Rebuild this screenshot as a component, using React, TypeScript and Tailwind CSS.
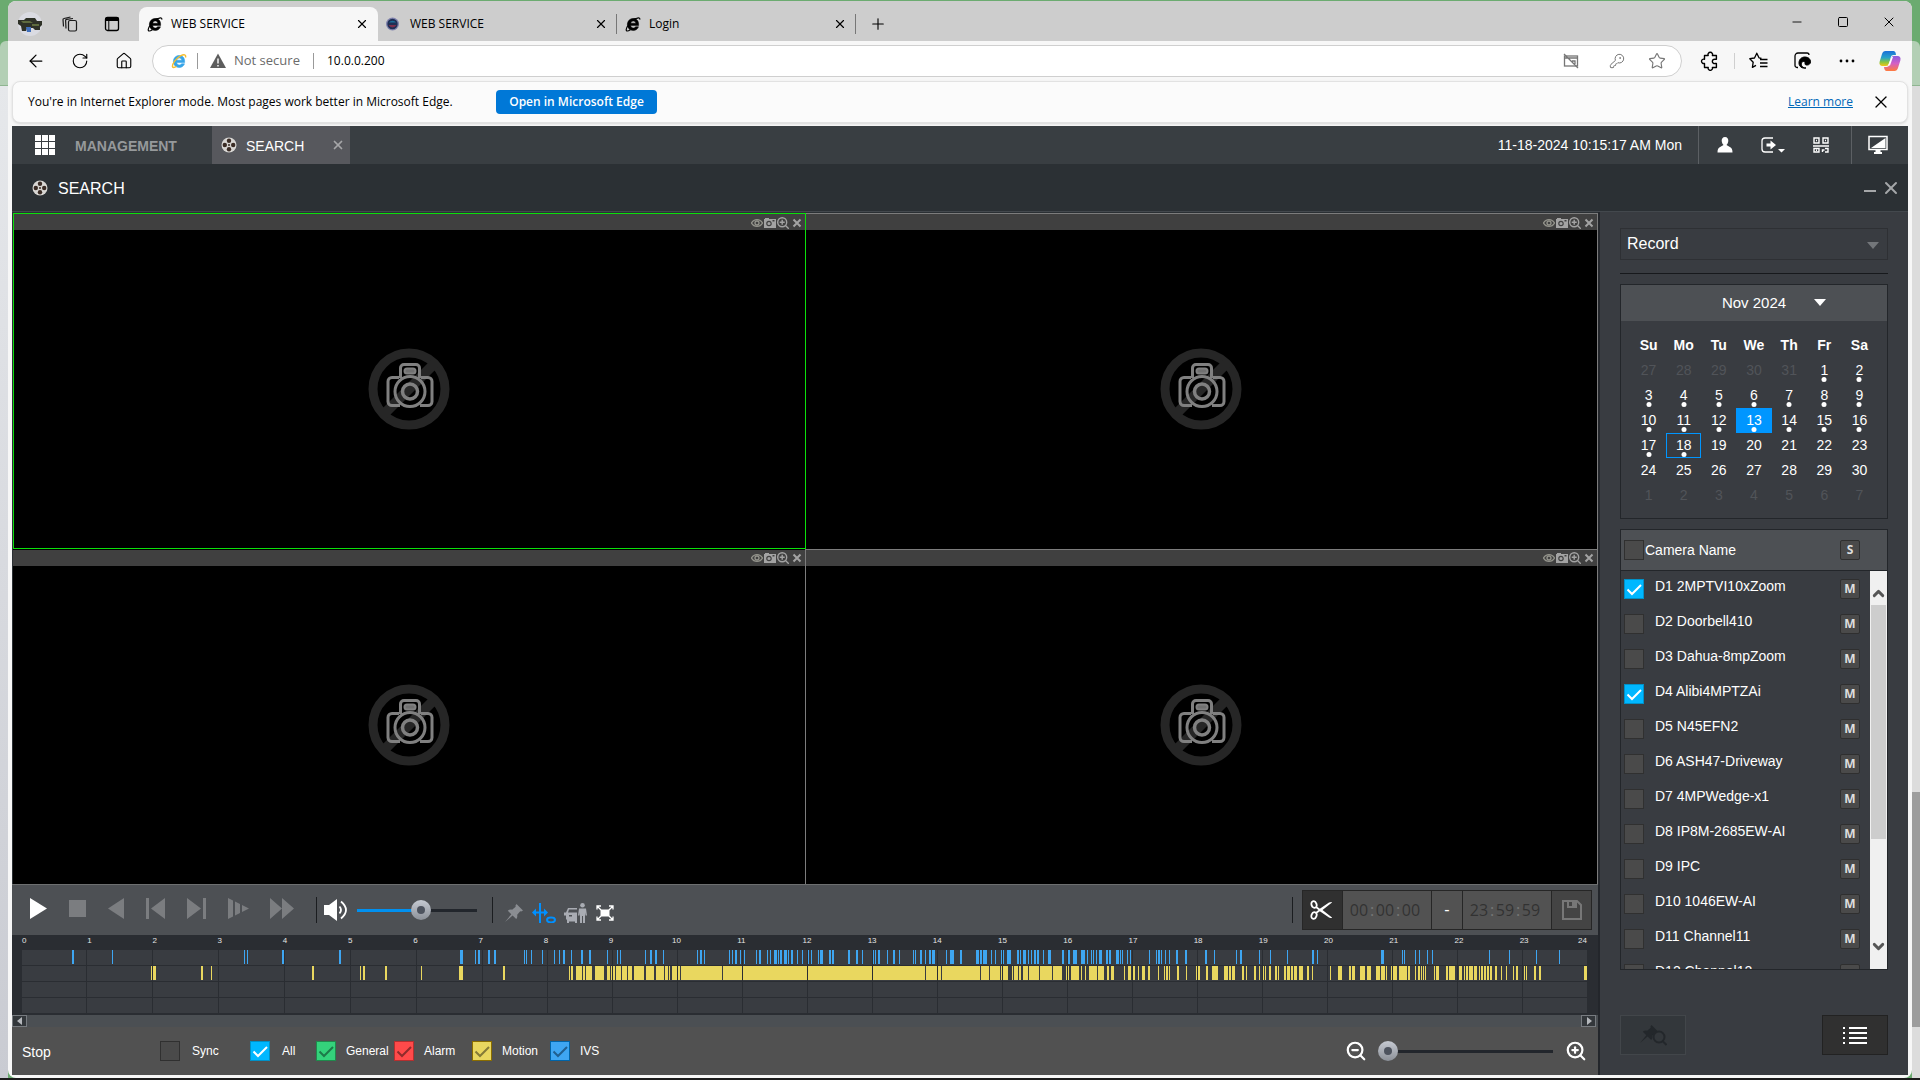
import { useState } from 'react';
import type { ReactNode } from 'react';
import {
  ArrowLeft,
  ChevronDown,
  ChevronUp,
  House,
  KeyRound,
  Minus,
  Plus,
  RotateCw,
  Square,
  Star,
  X,
  ZoomIn,
  ZoomOut,
} from 'lucide-react';

type Segment = [x: number, width: number];

const TRACK_WIDTH = 1565;
const HOUR_LINES = [
  64, 130, 196, 262, 328, 394, 460, 525, 590, 655, 720, 785, 850, 915, 980, 1045, 1110, 1175, 1240, 1305, 1370, 1435,
  1500,
];

const IVS_SEGMENTS: Segment[] = [
  [50, 2], [90, 1], [222, 1], [225, 1], [260, 2], [317, 2], [438, 3], [453, 1], [456, 2], [466, 2], [472, 2],
  [502, 1], [504, 1], [509, 1], [520, 1], [532, 1], [537, 1], [541, 2], [549, 1], [559, 2], [567, 2], [585, 1],
  [595, 1], [598, 1], [623, 1], [628, 2], [633, 2], [641, 1], [675, 1], [678, 2], [682, 1], [707, 1], [710, 1],
  [713, 2], [718, 1], [722, 1], [734, 1], [737, 2], [745, 1], [748, 1], [752, 3], [756, 1], [758, 2], [762, 3],
  [766, 1], [769, 2], [775, 1], [780, 1], [786, 1], [789, 1], [796, 1], [798, 3], [807, 2], [810, 2], [826, 2],
  [834, 2], [840, 1], [851, 1], [853, 1], [856, 2], [865, 1], [871, 2], [877, 1], [891, 1], [893, 1], [898, 2],
  [903, 1], [907, 2], [910, 3], [924, 1], [928, 4], [938, 2], [954, 3], [958, 2], [961, 4], [969, 1], [973, 1],
  [979, 1], [981, 1], [985, 4], [995, 2], [998, 1], [1001, 3], [1006, 1], [1009, 1], [1012, 2], [1015, 2],
  [1021, 1], [1026, 3], [1040, 2], [1046, 2], [1051, 4], [1059, 4], [1065, 1], [1069, 1], [1071, 1], [1074, 1],
  [1077, 3], [1084, 2], [1087, 2], [1094, 3], [1098, 1], [1100, 1], [1105, 1], [1108, 1], [1127, 1], [1134, 1],
  [1136, 2], [1139, 1], [1143, 1], [1147, 1], [1154, 2], [1163, 2], [1183, 2], [1192, 1], [1214, 1], [1218, 2],
  [1237, 1], [1248, 1], [1265, 1], [1290, 2], [1295, 1], [1359, 3], [1380, 1], [1382, 1], [1393, 1], [1397, 1],
  [1405, 1], [1410, 1], [1467, 1], [1487, 1], [1514, 1], [1537, 1],
];

const MOTION_SEGMENTS: Segment[] = [
  [129, 1], [131, 3], [179, 2], [189, 1], [290, 2], [338, 1], [341, 2], [363, 2], [399, 1], [437, 4], [481, 2],
  [547, 1], [549, 2], [554, 6], [561, 2], [564, 6], [573, 9], [585, 3], [589, 1], [591, 2], [594, 5], [600, 5],
  [606, 4], [612, 10], [624, 8], [634, 8], [643, 3], [647, 1], [650, 8], [659, 41], [701, 202], [904, 15],
  [920, 38], [959, 8], [968, 10], [979, 1], [980, 6], [990, 1], [992, 4], [997, 2], [1001, 5], [1007, 10],
  [1018, 12], [1031, 9], [1044, 1], [1046, 1], [1049, 8], [1059, 1], [1063, 1], [1067, 8], [1076, 6], [1085, 2],
  [1089, 3], [1102, 1], [1106, 3], [1111, 2], [1116, 1], [1120, 3], [1126, 2], [1136, 1], [1142, 1], [1144, 2],
  [1147, 1], [1155, 2], [1164, 1], [1174, 1], [1176, 2], [1184, 2], [1190, 6], [1202, 4], [1207, 2], [1210, 3],
  [1220, 2], [1224, 1], [1232, 2], [1237, 1], [1241, 1], [1243, 1], [1247, 2], [1253, 2], [1256, 1], [1262, 2],
  [1265, 3], [1269, 2], [1272, 3], [1277, 4], [1285, 2], [1290, 1], [1308, 1], [1316, 4], [1327, 2], [1330, 3],
  [1338, 5], [1345, 4], [1354, 4], [1359, 4], [1364, 1], [1369, 1], [1371, 4], [1377, 8], [1386, 2], [1393, 1],
  [1396, 2], [1399, 1], [1401, 1], [1403, 1], [1412, 1], [1414, 3], [1424, 2], [1427, 6], [1437, 3], [1442, 1],
  [1444, 2], [1447, 4], [1452, 3], [1457, 1], [1459, 2], [1462, 2], [1465, 2], [1468, 2], [1473, 2], [1479, 1],
  [1484, 1], [1491, 1], [1494, 2], [1502, 1], [1504, 1], [1512, 2], [1517, 2], [1562, 3],
];

const CAMERAS = [
  'D1 2MPTVI10xZoom',
  'D2 Doorbell410',
  'D3 Dahua-8mpZoom',
  'D4 Alibi4MPTZAi',
  'D5 N45EFN2',
  'D6 ASH47-Driveway',
  'D7 4MPWedge-x1',
  'D8 IP8M-2685EW-AI',
  'D9 IPC',
  'D10 1046EW-AI',
  'D11 Channel11',
  'D12 Channel12',
];

const WEEKDAYS = ['Su', 'Mo', 'Tu', 'We', 'Th', 'Fr', 'Sa'];

const WEEKS = [
  [27, 28, 29, 30, 31, 1, 2],
  [3, 4, 5, 6, 7, 8, 9],
  [10, 11, 12, 13, 14, 15, 16],
  [17, 18, 19, 20, 21, 22, 23],
  [24, 25, 26, 27, 28, 29, 30],
  [1, 2, 3, 4, 5, 6, 7],
];

/* ---------- icons ---------- */

const ExplorerIcon = ({ className }: { className: string }) => (
  <svg viewBox="0 0 16 16" className={className} aria-hidden="true">
    <path
      d="M13.600 9.600H5.700c.1 1.500 1.200 2.400 2.600 2.400 1 0 1.800-.4 2.200-1.200h3c-.8 2.300-2.700 3.700-5.300 3.700-3.400 0-5.800-2.400-5.800-5.900 0-3.600 2.500-6.100 5.900-6.100 3.500 0 5.700 2.600 5.300 7.100zM5.800 7.200h4.900C10.600 5.800 9.600 5 8.300 5 7 5 6 5.800 5.800 7.200z"
      fill="currentColor"
      stroke="currentColor"
      strokeWidth="0.500"
    />
    <path
      d="M14.800 3.600c.3-1.600-.9-2.200-3.200-1.200M2.900 9.500C.9 12.500.7 15 2.300 15c.8 0 1.900-.5 3-1.300M11.600 2.400C8 2.800 4.600 5.600 2.900 8.600"
      fill="none"
      stroke="currentColor"
      strokeWidth="1.200"
    />
  </svg>
);

const ExplorerColorIcon = () => (
  <svg viewBox="0 0 16 16" className="size-4" aria-hidden="true">
    <path
      d="M13.600 9.600H5.700c.1 1.500 1.200 2.400 2.600 2.400 1 0 1.800-.4 2.200-1.200h3c-.8 2.300-2.700 3.700-5.300 3.700-3.400 0-5.800-2.400-5.800-5.900 0-3.600 2.500-6.100 5.900-6.100 3.500 0 5.700 2.600 5.300 7.100zM5.800 7.200h4.900C10.600 5.800 9.600 5 8.300 5 7 5 6 5.800 5.800 7.200z"
      fill="#35a4e8"
      stroke="#35a4e8"
      strokeWidth="0.600"
    />
    <path
      d="M14.500 4.500c.8-3-1.500-3.400-5-1.600C5.500 5 1.200 10.500 1.400 13.400c.1 1.500 2 1.300 4 0"
      fill="none"
      stroke="#f5bd2f"
      strokeWidth="1.400"
    />
  </svg>
);

const ReelIcon = () => (
  <svg viewBox="0 0 16 16" className="size-4" aria-hidden="true">
    <circle cx="8" cy="8" r="7.500" fill="#d8d6d3" />
    <circle cx="8" cy="3.800" r="2.200" fill="#3a2b24" />
    <circle cx="8" cy="12.200" r="2.200" fill="#3a2b24" />
    <circle cx="3.800" cy="8" r="2.200" fill="#3a2b24" />
    <circle cx="12.200" cy="8" r="2.200" fill="#3a2b24" />
    <circle cx="8" cy="8" r="1" fill="#3a2b24" />
  </svg>
);

const NoCameraIcon = () => (
  <svg viewBox="0 0 82 82" className="size-[82px]" aria-hidden="true">
    <circle cx="41" cy="41" r="36" fill="none" stroke="#262626" strokeWidth="9" />
    <path d="M66 16 16 66" stroke="#262626" strokeWidth="10" />
    <g fill="none" stroke="#808080" strokeWidth="3">
      <path d="M31 29.500h-7a4 4 0 0 0-4 4v20a4 4 0 0 0 4 4h8M52 57.500h8a4 4 0 0 0 4-4v-20a4 4 0 0 0-4-4h-7" />
      <path d="M32.500 30V20a3.500 3.500 0 0 1 3.500-3.500h12a3.500 3.500 0 0 1 3.500 3.500v10" />
      <rect x="36.500" y="20.500" width="11" height="5" rx="2.500" fill="#707070" strokeWidth="2" />
      <circle cx="42" cy="43.500" r="15" />
      <circle cx="42" cy="43.500" r="7.500" strokeWidth="3.500" />
    </g>
  </svg>
);

const CopilotIcon = () => (
  <svg viewBox="0 0 22 22" className="size-[22px]" aria-hidden="true">
    <defs>
      <linearGradient id="copilotLeft" x1="0" y1="0" x2="0" y2="1">
        <stop offset="0" stopColor="#1b6fd8" />
        <stop offset="0.450" stopColor="#27a3c9" />
        <stop offset="0.750" stopColor="#8cc63f" />
        <stop offset="1" stopColor="#f5c518" />
      </linearGradient>
      <linearGradient id="copilotRight" x1="0" y1="0" x2="0" y2="1">
        <stop offset="0" stopColor="#8a5be0" />
        <stop offset="0.500" stopColor="#d45fc4" />
        <stop offset="1" stopColor="#ff7a3d" />
      </linearGradient>
    </defs>
    <path d="M6.500 1h8c1.300 0 1.800 1 2.200 2.200L17 5h-2.500c-1.500 0-2.300.8-2.700 2.200L10 13.500C9.500 15.200 8.700 16 7 16H3.500C1 16 0 14.200.6 11.800L3 4C3.700 2 4.700 1 6.500 1z" fill="url(#copilotLeft)" />
    <path d="M15.500 21h-8c-1.300 0-1.800-1-2.200-2.200L5 17h2.500c1.500 0 2.300-.8 2.700-2.200L12 8.500C12.500 6.800 13.300 6 15 6h3.500C21 6 22 7.800 21.400 10.200L19 18c-.7 2-1.700 3-3.500 3z" fill="url(#copilotRight)" />
    <path d="M12.500 7h1.500l-3 8.500H9z" fill="#fff" />
  </svg>
);

const PinShape = () => (
  <path d="M12.500 1 19 7.500l-1.800 1-1-.3-3 3.600c.3 2-.1 3.300-1 4.300L8.600 12.500 1 19l6.300-7.700L3.800 7.700c1-1 2.500-1.300 4.300-1l3.600-3-.3-1z" />
);

/* ---------- browser chrome ---------- */

const IconButton = ({ label, className, children }: { label: string; className: string; children: ReactNode }) => (
  <button type="button" aria-label={label} className={`flex items-center justify-center ${className}`}>
    {children}
  </button>
);

interface BrowserTabProps {
  title: string;
  icon: ReactNode;
  active?: boolean;
  divider?: boolean;
}

const BrowserTab = ({ title, icon, active, divider }: BrowserTabProps) => (
  <div
    className={`flex h-[34px] w-[239px] items-center pb-px pl-2 pr-[10px] ${active ? 'rounded-t-lg bg-[#f7f7f7]' : ''}`}
  >
    <button type="button" className="flex flex-1 items-center gap-2 text-left text-[12px] leading-4">
      {icon}
      <span>{title}</span>
    </button>
    <IconButton label={`Close ${title}`} className="size-3">
      <X className="size-[14px] shrink-0" strokeWidth={2} />
    </IconButton>
    {divider && <span className="-mr-[10px] ml-[9px] h-5 w-px bg-[#777]" />}
  </div>
);

const TitleBar = () => (
  <div className="flex h-10 items-end rounded-t-lg bg-[#cdcdcd]">
    <div className="flex h-[34px] w-[131px] items-center pl-[10px]">
      <svg viewBox="0 0 24 24" className="size-6" role="img" aria-label="Profile">
        <circle cx="12" cy="12" r="12" fill="#dadbe2" />
        <path d="M0 8h6l2-2h9l2 3h5v4l-2 2v3h-5l-2-2H9l-1 3H4l-1-5-3-2z" fill="#2e3127" />
        <path d="M3 9h9l3 2H5zM14 12h7v2h-7z" fill="#5f6b3f" />
        <path d="M8 15h5v5H9z" fill="#3f6fbc" />
      </svg>
      <IconButton label="Workspaces" className="ml-5 size-4">
        <svg viewBox="0 0 16 16" className="size-4" fill="none" stroke="#1a1a1a" strokeWidth="1.200">
          <rect x="6.500" y="4.500" width="8" height="10.500" rx="1.500" />
          <path d="M4 12.500 3.600 4.500q0-1 1-1.200L11 2.500M1.500 10.500 1 3.700q0-1 1-1.200L8.500 1" />
        </svg>
      </IconButton>
      <IconButton label="Tab actions menu" className="ml-[26px] size-4">
        <svg viewBox="0 0 16 16" className="size-4">
          <rect x="1.500" y="1.500" width="13" height="13" rx="2" fill="none" stroke="#000" strokeWidth="1.300" />
          <path d="M1 5V3a2 2 0 0 1 2-2h10a2 2 0 0 1 2 2v2z" />
          <path d="M4.800 5v9.500" stroke="#000" />
        </svg>
      </IconButton>
    </div>
    <BrowserTab title="WEB SERVICE" active icon={<ExplorerIcon className="size-4" />} />
    <BrowserTab
      title="WEB SERVICE"
      divider
      icon={
        <svg viewBox="0 0 16 16" className="size-4" aria-hidden="true">
          <circle cx="6.500" cy="8" r="6.500" fill="#8083ad" />
          <circle cx="6.500" cy="8" r="5.200" fill="#1f2f55" />
          <path d="M3 6.500a4 3.500 0 0 1 7 0z" fill="#1f6f9c" />
          <path d="M2.500 9h8a4.500 4.500 0 0 1-8 0z" fill="#7b2f4d" />
        </svg>
      }
    />
    <BrowserTab title="Login" divider icon={<ExplorerIcon className="size-4" />} />
    <IconButton label="New tab" className="ml-[14px] mb-[9px] size-4">
      <Plus className="size-[18px] shrink-0" strokeWidth={1.5} />
    </IconButton>
    <div className="ml-auto flex items-center gap-8 pb-3 pr-4">
      <IconButton label="Minimize" className="size-[14px]">
        <Minus className="size-[14px]" strokeWidth={1.5} />
      </IconButton>
      <IconButton label="Maximize" className="size-[14px]">
        <Square className="size-3" strokeWidth={2} />
      </IconButton>
      <IconButton label="Close" className="size-[14px]">
        <X className="size-[16px] shrink-0" strokeWidth={1.5} />
      </IconButton>
    </div>
  </div>
);

const AddressBar = () => (
  <div className="flex items-center pb-1 pl-[18px] pr-[11px] pt-1">
    <div className="flex w-[126px] gap-6">
      <IconButton label="Back" className="size-5">
        <ArrowLeft className="size-5" strokeWidth={1.5} />
      </IconButton>
      <IconButton label="Refresh" className="size-5">
        <RotateCw className="size-[18px]" strokeWidth={1.5} />
      </IconButton>
      <IconButton label="Home" className="size-5">
        <House className="size-[18px]" strokeWidth={1.5} />
      </IconButton>
    </div>
    <div className="flex h-8 flex-1 items-center rounded-full border border-[#cfcfcf] bg-white pl-[18px] pr-4">
      <ExplorerColorIcon />
      <span className="ml-[10px] h-4 w-px bg-[#9a9a9a]" />
      <svg viewBox="0 0 16 16" className="ml-3 size-4" aria-hidden="true">
        <path d="M8 .5 16 15H0z" fill="#5d5d5d" />
        <path d="M8 5.500v5M8 12v1.500" stroke="#fff" strokeWidth="1.400" />
      </svg>
      <span className="ml-2 w-[79px] text-[13px] text-[#6b6b6b]">Not secure</span>
      <span className="h-4 w-px bg-[#9a9a9a]" />
      <input
        type="text"
        aria-label="Address"
        defaultValue="10.0.0.200"
        className="ml-[13px] flex-1 text-[12px] text-black outline-none"
      />
      <div className="flex items-center gap-7 text-[#767676]">
        <IconButton label="Pop-up blocked" className="size-4">
          <svg viewBox="0 0 16 16" className="size-4" fill="none" stroke="currentColor" strokeWidth="1.300">
            <rect x="1.500" y="3" width="13" height="10" />
            <path d="M1.500 5h13M1 1l14 14M9 8h3v3" />
          </svg>
        </IconButton>
        <div className="ml-[2px] flex items-center gap-6">
          <IconButton label="Passwords" className="size-4">
            <KeyRound className="size-4" strokeWidth={1.5} />
          </IconButton>
          <IconButton label="Add to favorites" className="size-4">
            <Star className="size-[18px] shrink-0" strokeWidth={1.5} />
          </IconButton>
        </div>
      </div>
    </div>
    <div className="ml-[18px] flex items-center">
      <IconButton label="Extensions" className="size-5">
        <svg viewBox="0 0 20 20" className="size-5" fill="none" stroke="#000" strokeWidth="1.400" strokeLinejoin="round">
          <path d="M4.500 4.500h3.700a2.300 2.300 0 1 1 4.200 0h4v3.800h-1.200a2.200 2.200 0 1 0 0 4.200h1.200v4h-4a2.200 2.200 0 1 1-4.200 0H4.500v-4.100a2.200 2.200 0 1 1 0-4.100z" />
        </svg>
      </IconButton>
      <span className="ml-[14px] h-4 w-px bg-[#cfcfcf]" />
      <IconButton label="Favorites" className="ml-[14px] size-5">
        <svg viewBox="0 0 20 20" className="size-5" fill="none" stroke="#000" strokeWidth="1.300" strokeLinejoin="round">
          <path d="M12.500 7.300 10 6.800 7.800 2.200 5.500 7l-4.700.7 3.400 3.500-.8 5.200L7 14.400M11 8.500h7.500M11 12h7.500M11 15.500h7.500" />
        </svg>
      </IconButton>
      <IconButton label="Internet Explorer mode" className="ml-6 size-5">
        <svg viewBox="0 0 20 20" className="size-5" fill="none" stroke="#000">
          <path d="M5 16.500H4a2 2 0 0 1-2-2V5a3 3 0 0 1 3-3h9a2 2 0 0 1 2 2" strokeWidth="1.300" />
          <path d="M6 12c0-3.500 2.300-6 6-6 3.500 0 5.500 2.200 5.500 4.800 0 2-1.500 3.200-3.500 3.200-1.500 0-2.200-.6-2-1.500.3-1 0-2-1.500-2-3 0-3.500 6.500 2.500 6.500-4 .8-7-1.500-7-5z" fill="#000" strokeWidth="1" />
        </svg>
      </IconButton>
      <IconButton label="Settings and more" className="ml-6 size-5">
        <svg viewBox="0 0 20 20" className="size-5">
          <circle cx="4" cy="10" r="1.400" />
          <circle cx="10" cy="10" r="1.400" />
          <circle cx="16" cy="10" r="1.400" />
        </svg>
      </IconButton>
      <IconButton label="Copilot" className="ml-[22px] size-[22px]">
        <CopilotIcon />
      </IconButton>
    </div>
  </div>
);

const ModeBanner = () => (
  <div className="mx-1 flex h-[42px] items-center rounded-lg border border-[#e2e2e2] bg-[#fbfbfb] pl-[15px] pr-[18px] text-[12px] shadow-sm">
    <p className="w-[468px] whitespace-nowrap text-black">
      You&apos;re in Internet Explorer mode. Most pages work better in Microsoft Edge.
    </p>
    <button type="button" className="h-6 w-[161px] rounded-sm bg-[#0078d7] text-[12px] font-semibold text-white">
      Open in Microsoft Edge
    </button>
    <a href="#learn-more" className="ml-auto text-[#0067b8] underline">
      Learn more
    </a>
    <IconButton label="Dismiss" className="ml-5 size-[16px]">
      <X className="size-[20px] shrink-0" strokeWidth={1.5} />
    </IconButton>
  </div>
);

/* ---------- recorder page ---------- */

const NavBar = () => (
  <nav className="flex h-[38px] items-center bg-[#393e42]">
    <div className="flex w-[200px] items-center pl-[22px]">
      <IconButton label="Menu" className="size-[22px]">
        <svg viewBox="0 0 22 22" className="size-[22px]" fill="#fff">
          <path d="M1 1h6v6H1zM8 1h6v6H8zM15 1h6v6h-6zM1 8h6v6H1zM8 8h6v6H8zM15 8h6v6h-6zM1 15h6v6H1zM8 15h6v6H8zM15 15h6v6h-6z" />
        </svg>
      </IconButton>
      <button type="button" className="ml-[19px] pt-[2px] text-[14px] font-bold text-[#96999b]">
        MANAGEMENT
      </button>
    </div>
    <div className="flex h-full w-[138px] items-center bg-[#57585d] pl-[9px] pr-[7px]">
      <button type="button" className="flex flex-1 items-center gap-[9px] text-[14px] text-white">
        <ReelIcon />
        <span className="pt-[2px]">SEARCH</span>
      </button>
      <IconButton label="Close SEARCH" className="size-[10px]">
        <X className="size-[14px] shrink-0 text-[#a6a7a9]" strokeWidth={3} />
      </IconButton>
    </div>
    <time className="ml-auto pr-4 text-[14px] text-white">11-18-2024 10:15:17 AM Mon</time>
    <div className="flex h-full items-center border-l border-[#5c6064] pl-[18px] text-white">
      <IconButton label="User" className="size-4">
        <svg viewBox="0 0 16 16" className="size-4" fill="currentColor">
          <path d="M8 0c2.300 0 3.500 1.700 3.300 4-.2 2-1 3.300-1.800 4l3.800 2.200c1.400.8 2.200 2 2.200 5.300H.5c0-3.300.8-4.500 2.200-5.300L6.500 8C5.700 7.300 4.900 6 4.700 4 4.500 1.700 5.700 0 8 0z" />
        </svg>
      </IconButton>
      <IconButton label="Log out" className="ml-[28px] h-4 w-6">
        <svg viewBox="0 0 24 16" className="h-4 w-6" fill="none" stroke="currentColor" strokeWidth="1.300">
          <path d="M12 1H4a3 3 0 0 0-3 3v8a3 3 0 0 0 3 3h8" />
          <path d="M5.500 6.500h4V3.500L15 8l-5.500 4.500v-3h-4zM17 12h7l-3.500 3.500z" fill="currentColor" stroke="none" />
        </svg>
      </IconButton>
      <IconButton label="QR code" className="ml-7 size-4">
        <svg viewBox="0 0 16 16" className="size-4" fill="none" stroke="currentColor" strokeWidth="1.400">
          <path d="M1 1h5v5H1zM10 1h5v5h-5zM1 11.500h5V15H1zM0 9h16M9.500 15v-2h2M12 11.500h3V15h-3M3 3.500h1M12 3.500h1M3 13.200h1" />
        </svg>
      </IconButton>
    </div>
    <div className="ml-[22px] flex h-full w-[57px] items-center border-l border-[#5c6064] pl-4 text-white">
      <IconButton label="Display" className="size-5">
        <svg viewBox="0 0 20 20" className="size-5" fill="currentColor">
          <path d="M1 1.500h18v13H1z" fill="none" stroke="currentColor" strokeWidth="1.500" />
          <path d="M17.500 3v10H3zM7.500 15h5v2H14v2H6v-2h1.500z" />
        </svg>
      </IconButton>
    </div>
  </nav>
);

const PageHeading = () => (
  <header className="flex h-12 items-center border-b border-[#43484d] bg-[#2b3034] pl-5 pr-[9px] text-white">
    <ReelIcon />
    <h1 className="ml-[10px] pt-[2px] text-[16px]">SEARCH</h1>
    <IconButton label="Minimize page" className="ml-auto size-4 text-[#a5a7a9]">
      <svg viewBox="0 0 16 16" className="size-4">
        <path d="M2 11h12" stroke="currentColor" strokeWidth="2" />
      </svg>
    </IconButton>
    <IconButton label="Close page" className="ml-[5px] size-4 text-[#a5a7a9]">
      <X className="size-5 shrink-0" strokeWidth={2.4} />
    </IconButton>
  </header>
);

const VideoCell = ({ selected, className }: { selected?: boolean; className: string }) => (
  <section className={`flex flex-col bg-black ${className} ${selected ? 'border border-[#0be00b]' : ''}`}>
    <div className="flex h-4 items-center justify-end gap-px bg-[#404040] pr-[3px] pt-px text-[#a3a3a3]">
      <IconButton label="Fisheye" className="size-3">
        <svg viewBox="0 0 12 12" className="size-3" fill="none" stroke="#94948c" strokeWidth="1.300">
          <path d="M.5 6C3 1.500 9 1.500 11.500 6 9 10.500 3 10.500.5 6z" />
          <circle cx="6" cy="6" r="2" />
        </svg>
      </IconButton>
      <IconButton label="Snapshot" className="size-3">
        <svg viewBox="0 0 12 12" className="size-3" fill="currentColor">
          <path d="M0 2h1V1h4v1h7v9H0z" />
          <circle cx="5" cy="6.500" r="2.200" fill="none" stroke="#404040" strokeWidth="1.200" />
          <path d="M8.500 3h2v1.500h-2z" fill="#404040" />
        </svg>
      </IconButton>
      <IconButton label="Digital zoom" className="size-3">
        <svg viewBox="0 0 12 12" className="size-3" fill="none" stroke="currentColor" strokeWidth="1.400">
          <circle cx="5.200" cy="5.200" r="4.500" />
          <path d="M2.700 5.200h5M5.200 2.700v5M8.500 8.500l3.300 3.300" />
        </svg>
      </IconButton>
      <IconButton label="Close window" className="ml-[2px] size-[10px]">
        <svg viewBox="0 0 10 10" className="size-[10px]" stroke="currentColor" strokeWidth="2">
          <path d="M1.500 1.500l7 7M8.500 1.500l-7 7" />
        </svg>
      </IconButton>
    </div>
    <div className="flex flex-1 items-center justify-center">
      <NoCameraIcon />
    </div>
  </section>
);

const KNOB = (
  <svg viewBox="0 0 20 20" className="size-5" aria-hidden="true">
    <defs>
      <linearGradient id="knobFill" x1="0" y1="0" x2="0" y2="1">
        <stop offset="0" stopColor="#c6cad2" />
        <stop offset="1" stopColor="#8b9098" />
      </linearGradient>
    </defs>
    <circle cx="10" cy="10" r="10" fill="url(#knobFill)" />
    <circle cx="10" cy="10" r="4" fill="#4d535e" />
  </svg>
);

interface SliderProps {
  label: string;
  initial: number;
  className: string;
}

// The native range input sits invisibly above the drawn track so it still takes input.
const Slider = ({ label, initial, className }: SliderProps) => {
  const [value, setValue] = useState(initial);

  return (
    <div className={`relative flex h-5 items-center ${className}`}>
      <span className="h-[3px] bg-[#0090f0]" style={{ width: `${value}%` }} />
      <span className="h-[3px] flex-1 bg-[#22262c]" />
      <span className="absolute -translate-x-1/2" style={{ left: `${value}%` }}>
        {KNOB}
      </span>
      <input
        type="range"
        aria-label={label}
        value={value}
        onChange={(e) => setValue(Number(e.target.value))}
        className="absolute inset-0 w-full opacity-0"
      />
    </div>
  );
};

const TRANSPORT = [
  { label: 'Play', width: 17, d: 'M0 0v21l17-10.500z' },
  { label: 'Stop', width: 17, d: 'M0 2h17v17H0z' },
  { label: 'Reverse play', width: 16, d: 'M16 0v21L0 10.500z' },
  { label: 'Previous frame', width: 19, d: 'M0 0h3v21H0zM19 0v21L5 10.500z' },
  { label: 'Next frame', width: 19, d: 'M0 0v21l14-10.500zM16 0h3v21h-3z' },
  { label: 'Slow', width: 20, d: 'M0 0l5 2.500v16L0 21zM7 3.500l5 2.500v9l-5 2.500zM14 7l7 3.500-7 3.500z' },
  { label: 'Fast forward', width: 24, d: 'M0 0l12 10.500L0 21zM12 0l12 10.500L12 21z' },
];

const TimeField = ({ label, parts }: { label: string; parts: string[] }) => (
  <fieldset
    aria-label={label}
    className="flex h-full w-[89px] items-center border-r border-[#262626] bg-[#525252] pl-[6px] font-['Open_Sans',sans-serif] text-[16px] text-[#323232]"
  >
    {parts.map((part, i) => (
      <span key={i} className="flex items-center">
        {i > 0 && <span className="w-[6px] text-center text-[#777]">:</span>}
        <input
          type="text"
          aria-label={`${label} part ${i + 1}`}
          defaultValue={part}
          className="w-5 text-center outline-none"
        />
      </span>
    ))}
  </fieldset>
);

const PlaybackControls = () => (
  <div className="flex h-[51px] items-center border-t border-[#6d6f70] bg-[#4d5054] pl-[18px] pr-[6px]">
    <div className="flex items-center gap-[22px] pb-[3px]">
      {TRANSPORT.map(({ label, width, d }) => (
        <IconButton key={label} label={label} className={label === 'Play' ? 'text-white' : 'text-[#7b7d80]'}>
          <svg width={width} height="21" viewBox={`0 0 ${width} 21`} className="overflow-visible" fill="currentColor">
            <path d={d} />
          </svg>
        </IconButton>
      ))}
    </div>
    <span className="ml-[22px] h-[26px] w-px bg-[#1b1d20]" />
    <IconButton label="Mute" className="ml-[7px] h-[22px] w-6 text-white">
      <svg viewBox="0 0 24 22" className="h-[22px] w-6" fill="none" stroke="currentColor" strokeWidth="1.800">
        <path d="M0 6h5l8-6v22l-8-6H0z" fill="currentColor" stroke="none" />
        <path d="M15.500 7.500q3 3.500 0 7M17 2.500q10 8.500 0 17" />
      </svg>
    </IconButton>
    <Slider label="Volume" initial={53} className="ml-[9px] w-[120px]" />
    <span className="ml-[15px] h-[26px] w-px bg-[#1b1d20]" />
    <div className="ml-[11px] flex items-center gap-2 pt-[6px]">
      <IconButton label="Mark" className="size-5">
        <svg viewBox="0 0 20 20" className="size-5" fill="#8a8d92">
          <PinShape />
        </svg>
      </IconButton>
      <IconButton label="Sync view" className="h-5 w-6">
        <svg viewBox="0 0 24 20" className="h-5 w-6" fill="none" stroke="#0090ff" strokeWidth="2">
          <path d="M8 0v20" />
          <path d="M0 9.500l4-4v3h8v-3l4 4-4 4v-3H4v3z" fill="#0090ff" stroke="none" />
          <ellipse cx="19" cy="17" rx="4" ry="2.400" />
        </svg>
      </IconButton>
      <IconButton label="Smart search" className="h-5 w-6">
        <svg viewBox="0 0 24 20" className="h-5 w-6" fill="#a9acb3">
          <circle cx="18.500" cy="2.300" r="2.300" />
          <path d="M15 5.500h7l1 7h-1.500l-.5-3V20h-2v-7h-1v7h-2V9.500l-.5 3H14z" />
          <path d="M4 5h9v1.500H5L4 9.500h9V20h-2v-1.500H5V20H3v-3.500H2v-4H0V9.500h2z" />
          <path d="M5 12h3v1.500H5z" fill="#4d5054" />
        </svg>
      </IconButton>
      <IconButton label="Full screen" className="size-[18px] text-white">
        <svg viewBox="0 0 18 18" className="size-[18px]" fill="none" stroke="currentColor" strokeWidth="1.300">
          <path d="M1 5.500V2h4M13 2h4v3.500M17 12.500V16h-4M5 16H1v-3.500M1 2l4 4M17 2l-4 4M1 16l4-4M17 16l-4-4" />
          <path d="M4.500 5.500h9v7h-9z" fill="currentColor" stroke="none" />
        </svg>
      </IconButton>
    </div>
    <span className="ml-auto h-[26px] w-px bg-[#1b1d20]" />
    <div className="ml-[9px] flex h-10 border border-[#262626]">
      <IconButton label="Clip" className="w-10 border-r border-[#262626] bg-[#303030] pr-[3px] text-white">
        <svg viewBox="0 0 22 20" className="h-5 w-[22px]" fill="none" stroke="currentColor" strokeWidth="1.800">
          <ellipse cx="4" cy="4.500" rx="2.500" ry="3.400" transform="rotate(-20 4 4.500)" />
          <ellipse cx="4" cy="15.500" rx="2.500" ry="3.400" transform="rotate(20 4 15.500)" />
          <path d="M6 7l4 3-4 3" />
          <path d="M8 10 19 2.500q3-1 3 0L12.500 10 22 17.500q0 1-3 0z" fill="currentColor" stroke="none" />
        </svg>
      </IconButton>
      <TimeField label="Start time" parts={['00', '00', '00']} />
      <span className="flex w-[31px] items-center justify-center border-r border-[#262626] bg-[#525252] text-[16px] text-white">
        -
      </span>
      <TimeField label="End time" parts={['23', '59', '59']} />
      <IconButton label="Save clip" className="w-[39px] bg-[#444] text-[#777]">
        <svg viewBox="0 0 20 20" className="size-5" fill="none" stroke="currentColor" strokeWidth="2">
          <path d="M1 1h14l4 4v14H1z" />
          <path d="M6 1v6h8V1" />
          <path d="M10 2h3v4h-3z" fill="currentColor" stroke="none" />
        </svg>
      </IconButton>
    </div>
  </div>
);

const Timeline = () => (
  <div className="bg-[#2a2d32] pb-px pl-[10px] pr-[11px]">
    <div className="flex h-[15px] pt-px text-[8px] leading-[9px] text-[#e4e4e4]">
      {Array.from({ length: 24 }, (_, hour) => (
        <div key={hour} className="flex flex-1 justify-between">
          <span className={hour >= 10 ? '-ml-[2px]' : ''}>{hour}</span>
          {hour === 23 && <span>24</span>}
        </div>
      ))}
    </div>
    <svg
      viewBox={`0 0 ${TRACK_WIDTH} 64`}
      preserveAspectRatio="none"
      shapeRendering="crispEdges"
      className="h-16 w-full"
      role="img"
      aria-label="Recordings by hour"
    >
      <rect width={TRACK_WIDTH} height="64" fill="#393c41" />
      {IVS_SEGMENTS.map(([x, w]) => (
        <rect key={x} x={x} y="0" width={w} height="14" fill="#3ea6f2" />
      ))}
      {MOTION_SEGMENTS.map(([x, w]) => (
        <rect key={x} x={x} y="16" width={w} height="14" fill="#e9d75f" />
      ))}
      {HOUR_LINES.map((x) => (
        <rect key={x} x={x} y="0" width="1" height="64" fill="#2a2d32" />
      ))}
      {[15, 31, 47, 63].map((y) => (
        <rect key={y} x="0" y={y} width={TRACK_WIDTH} height="1" fill="#2a2d32" />
      ))}
    </svg>
  </div>
);

const TimelineScroll = () => (
  <div className="flex h-3 justify-between bg-[#4b4f53] pr-[2px]">
    <IconButton label="Scroll left" className="w-[15px] border border-[#777b80] bg-[#33373b]">
      <svg viewBox="0 0 6 8" className="h-2 w-[6px]" fill="#b5b8bc">
        <path d="M5 0v8L0 4z" />
      </svg>
    </IconButton>
    <IconButton label="Scroll right" className="w-[15px] border border-[#777b80] bg-[#33373b]">
      <svg viewBox="0 0 6 8" className="h-2 w-[6px]" fill="#b5b8bc">
        <path d="M1 0v8l5-4z" />
      </svg>
    </IconButton>
  </div>
);

interface CheckBoxProps {
  id: string;
  label?: string;
  checked?: boolean;
  box?: string;
  tick?: string;
}

const CheckBox = ({
  id,
  label,
  checked = false,
  box = 'checked:border-[#0091c8] checked:bg-[#00b7ff]',
  tick = 'text-white',
}: CheckBoxProps) => (
  <span className="relative flex size-5 shrink-0">
    <input
      id={id}
      type="checkbox"
      aria-label={label}
      defaultChecked={checked}
      className={`peer size-5 appearance-none border border-[#303030] bg-[#4a4a4a] ${box}`}
    />
    <svg
      viewBox="0 0 20 20"
      className={`pointer-events-none absolute inset-0 hidden size-5 peer-checked:block ${tick}`}
      fill="none"
      stroke="currentColor"
      strokeWidth="2"
      aria-hidden="true"
    >
      <path d="M3.500 10.500 8 15l9-9" />
    </svg>
  </span>
);

const LEGEND = [
  { id: 'sync', label: 'Sync', checked: false, width: 'w-[90px]', gap: 'gap-3' },
  { id: 'all', label: 'All', checked: true, width: 'w-[66px]', gap: 'gap-3' },
  {
    id: 'general',
    label: 'General',
    checked: true,
    width: 'w-[78px]',
    gap: 'gap-[10px]',
    box: 'checked:border-[#1f8a4c] checked:bg-[#34d27b]',
    tick: 'text-[#1d7a49]',
  },
  {
    id: 'alarm',
    label: 'Alarm',
    checked: true,
    width: 'w-[78px]',
    gap: 'gap-[10px]',
    box: 'checked:border-[#b52f2f] checked:bg-[#ff4a4a]',
    tick: 'text-[#8f2b2b]',
  },
  {
    id: 'motion',
    label: 'Motion',
    checked: true,
    width: 'w-[78px]',
    gap: 'gap-[10px]',
    box: 'checked:border-[#8a6d00] checked:bg-[#e9d75f]',
    tick: 'text-[#847a37]',
  },
  {
    id: 'ivs',
    label: 'IVS',
    checked: true,
    width: 'w-[78px]',
    gap: 'gap-[10px]',
    box: 'checked:border-[#0064a8] checked:bg-[#3ea6f2]',
    tick: 'text-[#205f8f]',
  },
];

const StatusBar = () => (
  <div className="flex h-12 items-center bg-[#515151] pl-[10px] pr-3 text-white">
    <span className="w-[138px] pt-[3px] text-[14px]">Stop</span>
    <div className="flex">
      {LEGEND.map(({ id, label, checked, width, gap, box, tick }) => (
        <div key={id} className={`flex items-center ${gap} ${width}`}>
          <CheckBox id={id} checked={checked} box={box} tick={tick} />
          <label htmlFor={id} className="text-[12px] leading-4">
            {label}
          </label>
        </div>
      ))}
    </div>
    <div className="ml-auto flex items-center">
      <IconButton label="Zoom out" className="size-5">
        <ZoomOut className="size-[22px] shrink-0" strokeWidth={2.4} />
      </IconButton>
      <Slider label="Timeline zoom" initial={0} className="ml-[22px] w-[165px]" />
      <IconButton label="Zoom in" className="ml-[13px] size-5">
        <ZoomIn className="size-[22px] shrink-0" strokeWidth={2.4} />
      </IconButton>
    </div>
  </div>
);

const Calendar = () => (
  <section className="border border-[#23262a]">
    <div className="flex h-9 items-center justify-center bg-[#4d5054] pl-10 text-[15px] text-white">
      <span>Nov 2024</span>
      <IconButton label="Choose month" className="ml-[28px] h-2 w-3">
        <svg viewBox="0 0 12 8" className="h-2 w-3" fill="#fff">
          <path d="M0 0h12L6 7z" />
        </svg>
      </IconButton>
    </div>
    <div className="px-[10px] pb-[10px] pt-[10px]">
      <table className="w-full table-fixed border-collapse text-center text-[14px] leading-4 text-white">
        <thead>
          <tr className="h-[27px]">
            {WEEKDAYS.map((day) => (
              <th key={day} scope="col" className="p-0 font-bold">
                {day}
              </th>
            ))}
          </tr>
        </thead>
        <tbody>
          {WEEKS.map((week, w) => (
            <tr key={w} className="h-[25px]">
              {week.map((day, d) => {
                const outside = (w === 0 && day > 7) || w === 5;
                const recorded = !outside && w < 4 && day <= 18;
                const state = day === 13 ? 'bg-[#0096ff]' : day === 18 ? 'outline outline-1 -outline-offset-1 outline-[#0096ff]' : '';
                return (
                  <td key={d} className="p-0">
                    <button
                      type="button"
                      className={`relative h-[25px] w-full pb-px ${outside ? 'text-[#515459]' : ''} ${outside ? '' : state}`}
                    >
                      {day}
                      {recorded && (
                        <span className="absolute bottom-px left-1/2 size-[5px] -translate-x-1/2 rounded-full bg-white" />
                      )}
                    </button>
                  </td>
                );
              })}
            </tr>
          ))}
        </tbody>
      </table>
    </div>
  </section>
);

const StreamButton = ({ label, children }: { label: string; children: string }) => (
  <button
    type="button"
    aria-label={label}
    className="size-5 rounded-xs border border-[#2f2f2f] bg-[#4a4a4a] font-['Open_Sans',sans-serif] text-[12px] font-bold leading-4 text-[#dedede]"
  >
    {children}
  </button>
);

const CameraList = () => (
  <section className="flex min-h-0 flex-1 flex-col border border-[#23262a] text-[14px] text-white">
    <div className="flex h-[41px] items-center border-b border-[#23262a] bg-[#4d5054] pl-[3px] pr-[27px]">
      <CheckBox id="allCameras" />
      <label htmlFor="allCameras" className="ml-px flex-1">
        Camera Name
      </label>
      <StreamButton label="Stream for all cameras">S</StreamButton>
    </div>
    <div className="flex min-h-0 flex-1">
      <ul className="min-h-0 flex-1 overflow-hidden pl-[3px] pr-[10px]">
        {CAMERAS.map((name, i) => (
          <li key={name} className="flex h-[35px] items-center">
            <CheckBox id={`camera${i}`} checked={i === 0 || i === 3} />
            <label htmlFor={`camera${i}`} className="ml-[11px] flex-1 pb-1">
              {name}
            </label>
            <StreamButton label={`Stream for ${name}`}>M</StreamButton>
          </li>
        ))}
      </ul>
      <div className="flex w-[17px] flex-col bg-[#f0f0f0] text-[#555]">
        <IconButton label="Scroll up" className="h-[34px] pt-[10px]">
          <ChevronUp className="size-[17px]" strokeWidth={4} />
        </IconButton>
        <span className="mx-px h-[234px] bg-[#cdcdcd]" />
        <IconButton label="Scroll down" className="mt-auto h-[34px] pb-3">
          <ChevronDown className="size-[17px]" strokeWidth={4} />
        </IconButton>
      </div>
    </div>
  </section>
);

const SidePanel = () => (
  <aside className="flex w-[310px] flex-col border-l-2 border-[#23262b] bg-[#393c41] px-5 pb-5 pt-4">
    <div className="relative">
      <select
        aria-label="Record source"
        className="h-8 w-full appearance-none border border-[#2e3034] bg-[#393c41] pl-[6px] text-[16px] text-white"
      >
        <option>Record</option>
      </select>
      <svg viewBox="0 0 12 8" className="pointer-events-none absolute right-[9px] top-[14px] h-2 w-3" fill="#73767a">
        <path d="M0 0h12L6 7z" />
      </svg>
    </div>
    <hr className="mb-[10px] mt-[13px] border-[#17191c]" />
    <Calendar />
    <div className="mt-[10px] flex min-h-0 flex-1 flex-col">
      <CameraList />
    </div>
    <div className="mt-[45px] flex justify-between">
      <IconButton label="Search marks" className="h-10 w-[66px] border border-[#42464a] bg-[#33373b] text-[#23272b]">
        <svg viewBox="0 0 28 22" className="h-[22px] w-7" fill="currentColor">
          <PinShape />
          <circle cx="20" cy="13" r="5.500" fill="#33373b" stroke="currentColor" strokeWidth="2" />
          <path d="M23.500 17l4 4" stroke="currentColor" strokeWidth="2" />
        </svg>
      </IconButton>
      <IconButton label="File list" className="h-10 w-[66px] border border-[#222] bg-[#303030]">
        <svg viewBox="0 0 24 18" className="h-[18px] w-6" stroke="#fff" strokeWidth="2">
          <path d="M6 2h18M6 7h18M6 12h18M6 17h18M0 2h2M0 7h2M0 12h2M0 17h2" />
        </svg>
      </IconButton>
    </div>
  </aside>
);

export default function App() {
  return (
    <div className="flex h-screen flex-col bg-[#1c1c1c] font-['Open_Sans',sans-serif]">
      <div className="flex min-h-0 flex-1 bg-[#6bab70]">
        <div className="flex w-2 flex-col">
          <div className="h-[41px]" />
          <div className="h-[45px] rounded-tl-md border-b border-[#8fb591] bg-[#b3cfb5]" />
          <div className="flex-1 bg-linear-to-b from-[#e6e8eb] to-[#c9cbd2]" />
        </div>

        <div className="mt-px flex min-w-0 flex-1 flex-col rounded-lg bg-[#f7f7f7] pb-[3px]">
          <TitleBar />
          <AddressBar />
          <ModeBanner />

          <main className="mx-1 mt-[3px] flex min-h-0 flex-1 flex-col font-['Liberation_Sans',Arial,sans-serif]">
            <NavBar />
            <PageHeading />
            <div className="flex min-h-0 flex-1">
              <div className="flex min-w-0 flex-1 flex-col bg-[#2b3034] pt-px">
                <div className="grid min-h-0 flex-1 grid-cols-2 grid-rows-2 pl-px">
                  <VideoCell selected className="" />
                  <VideoCell className="border-r border-t border-[#7c7c7c]" />
                  <VideoCell className="border-r border-[#7c7c7c] pt-px" />
                  <VideoCell className="border-r border-t border-[#7c7c7c]" />
                </div>
                <PlaybackControls />
                <Timeline />
                <TimelineScroll />
                <StatusBar />
              </div>
              <SidePanel />
            </div>
          </main>
        </div>

        <div className="flex w-2 flex-col">
          <div className="h-[41px]" />
          <div className="h-[45px] rounded-tr-md border-b border-[#8fb591] bg-[#b3cfb5]" />
          <div className="flex flex-1 flex-col bg-[#dcdcdc]">
            <div className="flex-1" />
            <div className="mb-[51px] h-[235px] bg-[#9d9d9d]" />
          </div>
        </div>
      </div>
      <div className="h-[2px]" />
    </div>
  );
}
